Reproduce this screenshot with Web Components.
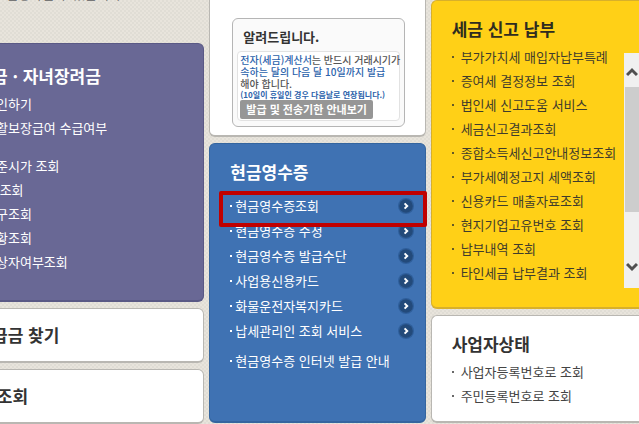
<!DOCTYPE html>
<html lang="ko">
<head>
<meta charset="UTF-8">
<title>현금영수증조회</title>
<style>
  body {
    margin: 0;
    background-color: #e6e2da;
    background-image: repeating-conic-gradient(#e0ddd5 0% 25%, #e8e4dc 0% 50%);
    background-size: 4px 4px;
    font-family: "Noto Sans CJK KR", sans-serif;
    overflow: hidden;
  }
</style>
</head>
<body>
<tax-portal></tax-portal>

<script>
// Panel with a heading, optional body in the default slot
class MenuPanel extends HTMLElement {
  connectedCallback() {
    this.attachShadow({ mode: 'open' });
    this.shadowRoot.innerHTML = `
      <style>
        :host {
          display: block;
          box-sizing: border-box;
          position: relative;
          padding: 16px 20px;
          border: 1px solid #b9b7b2;
          border-bottom-width: 2px;
          border-radius: 6px;
          background: #fff;
          color: #333;
        }
        :host([tone="purple"]) { background: #696895; border-color: #5a5985; color: #fff; }
        :host([tone="blue"]) { background: #3f72b3; border-color: #34659f; color: #fff; }
        :host([tone="yellow"]) { background: #ffd017; border-color: #d8b02a; color: #2e2c20; }
        :host([edge="left"]) { border-left: 0; border-radius: 0 6px 6px 0; padding-left: 0; }
        :host([edge="right"]) { border-right: 0; border-radius: 6px 0 0 6px; padding-right: 0; }
        h2 {
          margin: 0;
          font-size: 17px;
          line-height: 24px;
          font-weight: 700;
          white-space: nowrap;
        }
        :host([edge="left"]) h2 { margin-left: -8px; }
      </style>
      <h2>${this.getAttribute('heading')}</h2>
      <slot></slot>
    `;
  }
}

// One link row of a menu
class MenuItem extends HTMLElement {
  connectedCallback() {
    this.attachShadow({ mode: 'open' });
    this.shadowRoot.innerHTML = `
      <style>
        :host {
          display: flex;
          align-items: center;
          position: relative;
          height: 24px;
          font-size: 13px;
          line-height: 24px;
        }
        :host([arrow]) { height: 25px; }
        :host([gap]) { margin-top: 14px; }
        :host([space]) { margin-top: 6px; }
        a {
          display: flex;
          flex: 1;
          align-items: center;
          color: inherit;
          text-decoration: none;
          white-space: nowrap;
        }
        .dot { width: 2px; height: 2px; margin-right: 7px; background: currentColor; opacity: 0.8; }
        :host([tight]) .dot { margin-right: 3px; opacity: 1; }
        :host([plain]) .dot { display: none; }
        :host([plain]) a { margin-left: -4px; }
        .text { flex: 1; }
        svg { display: none; width: 16px; height: 16px; }
        :host([arrow]) svg { display: block; }
        :host([marked])::after {
          content: '';
          position: absolute;
          inset: -2px -13px -9px -11px;
          border: 4px solid #c00000;
          border-radius: 2px;
          z-index: 2;
        }
      </style>
      <a href="#">
        <span class="dot"></span>
        <span class="text"><slot></slot></span>
        <svg viewBox="0 0 16 16" aria-hidden="true">
          <circle cx="8" cy="8" r="8" fill="#2f5f9b"/>
          <circle cx="8" cy="8" r="6.8" fill="#234a7a"/>
          <path d="M6.6 5.4 9.2 8 6.6 10.6" fill="none" stroke="#fff" stroke-width="2"/>
        </svg>
      </a>
    `;
  }
}

class NoticeCard extends HTMLElement {
  connectedCallback() {
    this.attachShadow({ mode: 'open' });
    this.shadowRoot.innerHTML = `
      <style>
        :host {
          display: block;
          padding: 8px 4px 5px;
          border: 1px solid #b5b5b5;
          border-radius: 6px;
          background: #fafafa;
        }
        h3 { margin: 0 6px; font-size: 13px; line-height: 20px; font-weight: 700; color: #333; }
        .box {
          margin-top: 4px;
          padding: 2px 2px 1px;
          border: 1px solid #e2e2e2;
          border-radius: 4px;
          background: #fff;
        }
        p { margin: 0; font-size: 10px; line-height: 12px; font-weight: 500; color: #555; white-space: nowrap; }
        b { font-weight: 500; color: #2b62ab; }
        small { display: block; font-size: 8px; line-height: 10px; font-weight: 700; color: #2b62ab; }
        button {
          display: block;
          margin: 0;
          padding: 0 6px;
          border: 0;
          border-radius: 2px;
          background: #969696;
          color: #fff;
          font: 700 11px/19px "Noto Sans CJK KR", sans-serif;
          white-space: nowrap;
        }
      </style>
      <h3>알려드립니다.</h3>
      <div class="box">
        <p><b>전자(세금)계산서</b>는 반드시 거래시기가<br><b>속하는 달의 다음 달 10일까지 발급</b><br>해야 합니다.
        <small>(10일이 휴일인 경우 다음날로 연장됩니다.)</small></p>
        <button type="button">발급 및 전송기한 안내보기</button>
      </div>
    `;
  }
}

class ScrollRail extends HTMLElement {
  connectedCallback() {
    this.attachShadow({ mode: 'open' });
    this.shadowRoot.innerHTML = `
      <style>
        :host { display: flex; flex-direction: column; background: #f0f0f0; }
        button {
          display: flex;
          align-items: center;
          justify-content: center;
          height: 34px;
          padding: 4px 0 0;
          border: 0;
          background: none;
        }
        button:last-child { height: 42px; padding: 0; }
        .track { flex: 1; display: flex; flex-direction: column; }
        .thumb { height: 125px; margin-left: 1px; background: #cdcdcd; }
        svg { width: 12px; height: 10px; }
        path { fill: none; stroke: #505050; stroke-width: 3; }
      </style>
      <button type="button" aria-label="위로"><svg viewBox="0 0 12 10"><path d="M1 8 6 3 11 8"/></svg></button>
      <div class="track"><div class="thumb"></div></div>
      <button type="button" aria-label="아래로"><svg viewBox="0 0 12 10"><path d="M1 2 6 7 11 2"/></svg></button>
    `;
  }
}

class TaxPortal extends HTMLElement {
  connectedCallback() {
    this.attachShadow({ mode: 'open' });
    this.shadowRoot.innerHTML = `
      <style>
        :host {
          display: grid;
          grid-template-columns: 204fr 216fr 208fr;
          column-gap: 5px;
          align-items: start;
        }
        .column { display: flex; flex-direction: column; gap: 6px; min-width: 0; }
        .intro { margin: -18px 0 31px 6px; font-size: 13px; line-height: 24px; color: #777; }
        .purple { padding-top: 20px; padding-bottom: 26px; }
        .purple .menu { padding-top: 4px; }
        .single { padding-top: 14px; padding-bottom: 14px; }
        .top { padding: 18px 20px 8px 22px; border: 1px solid #b9b7b2; border-width: 0 1px 2px; border-radius: 0 0 6px 6px; background: #fff; }
        .blue { padding-right: 0; padding-bottom: 48px; }
        .blue .menu { padding-top: 9px; padding-right: 11px; }
        .yellow { padding-bottom: 22px; }
        .yellow .menu, .status .menu { padding-top: 4px; color: #3f3c2c; }
        .status .menu { color: #444; }
        .status { padding-bottom: 13px; }
        scroll-rail { position: absolute; top: 52px; right: 0; width: 15px; height: 235px; }
      </style>

      <div class="column">
        <p class="intro">신청하실 수 있습니다</p>
        <menu-panel class="purple" tone="purple" edge="left" heading="금 · 자녀장려금">
          <div class="menu">
            <menu-item plain>인하기</menu-item>
            <menu-item plain>활보장급여 수급여부</menu-item>
            <menu-item plain gap>준시가 조회</menu-item>
            <menu-item plain>&nbsp;조회</menu-item>
            <menu-item plain>구조회</menu-item>
            <menu-item plain>황조회</menu-item>
            <menu-item plain>상자여부조회</menu-item>
          </div>
        </menu-panel>
        <menu-panel class="single" edge="left" heading="급금 찾기"></menu-panel>
        <menu-panel class="single" edge="left" heading="&nbsp;조회"></menu-panel>
      </div>

      <div class="column">
        <div class="top"><notice-card></notice-card></div>
        <menu-panel class="blue" tone="blue" heading="현금영수증">
          <div class="menu">
            <menu-item tight arrow marked>현금영수증조회</menu-item>
            <menu-item tight arrow>현금영수증 수정</menu-item>
            <menu-item tight arrow>현금영수증 발급수단</menu-item>
            <menu-item tight arrow>사업용신용카드</menu-item>
            <menu-item tight arrow>화물운전자복지카드</menu-item>
            <menu-item tight arrow>납세관리인 조회 서비스</menu-item>
            <menu-item tight space>현금영수증 인터넷 발급 안내</menu-item>
          </div>
        </menu-panel>
      </div>

      <div class="column">
        <menu-panel class="yellow" tone="yellow" edge="right" heading="세금 신고 납부">
          <div class="menu">
            <menu-item>부가가치세 매입자납부특례</menu-item>
            <menu-item>증여세 결정정보 조회</menu-item>
            <menu-item>법인세 신고도움 서비스</menu-item>
            <menu-item>세금신고결과조회</menu-item>
            <menu-item>종합소득세신고안내정보조회</menu-item>
            <menu-item>부가세예정고지 세액조회</menu-item>
            <menu-item>신용카드 매출자료조회</menu-item>
            <menu-item>현지기업고유번호 조회</menu-item>
            <menu-item>납부내역 조회</menu-item>
            <menu-item>타인세금 납부결과 조회</menu-item>
          </div>
          <scroll-rail></scroll-rail>
        </menu-panel>
        <menu-panel class="status" edge="right" heading="사업자상태">
          <div class="menu">
            <menu-item>사업자등록번호로 조회</menu-item>
            <menu-item>주민등록번호로 조회</menu-item>
          </div>
        </menu-panel>
      </div>
    `;
  }
}

customElements.define('menu-panel', MenuPanel);
customElements.define('menu-item', MenuItem);
customElements.define('notice-card', NoticeCard);
customElements.define('scroll-rail', ScrollRail);
customElements.define('tax-portal', TaxPortal);
</script>
</body>
</html>
